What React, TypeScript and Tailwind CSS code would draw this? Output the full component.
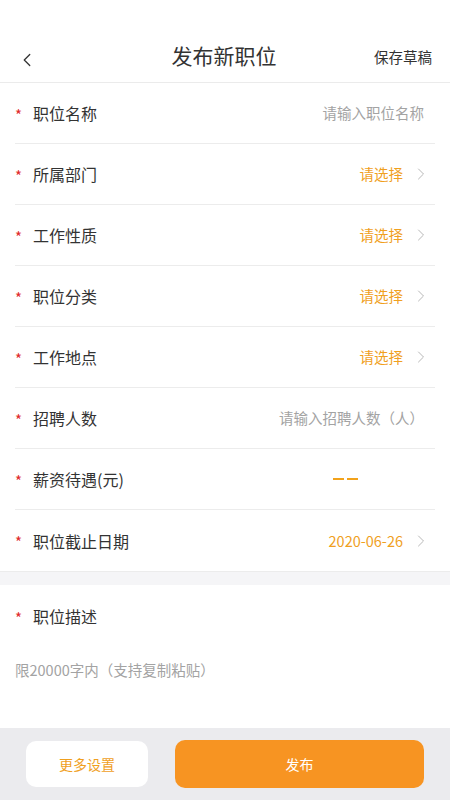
import { ChevronLeft, ChevronRight } from "lucide-react";

type Row = {
  label: string;
  value: string;
  kind: "input" | "select" | "dash";
};

const rows: Row[] = [
  { label: "职位名称", value: "请输入职位名称", kind: "input" },
  { label: "所属部门", value: "请选择", kind: "select" },
  { label: "工作性质", value: "请选择", kind: "select" },
  { label: "职位分类", value: "请选择", kind: "select" },
  { label: "工作地点", value: "请选择", kind: "select" },
  { label: "招聘人数", value: "请输入招聘人数（人）", kind: "input" },
  { label: "薪资待遇(元)", value: "——", kind: "dash" },
  { label: "职位截止日期", value: "2020-06-26", kind: "select" },
];

const font = {
  fontFamily: '"Noto Sans CJK SC", "Noto Sans", sans-serif',
};

const FormRow = ({ row, last }: { row: Row; last: boolean }) => (
  <div
    className={`mx-[15px] h-[61px] flex items-center ${
      last ? "" : "border-b border-[#ececec]"
    }`}
  >
    <span className="text-[#e02a2a] text-[15px] w-[18px] leading-none pt-[2px]">*</span>
    <span className="text-[16px] text-[#333333]">{row.label}</span>
    <div className="flex-1 flex items-center justify-end">
      {row.kind === "input" && (
        <span className="text-[14.5px] text-[#a3a3a3] mr-[11px]">{row.value}</span>
      )}
      {row.kind === "dash" && (
        <span className="mr-[77px] flex gap-[3px]" aria-label={row.value}>
          <span className="w-[11px] h-[2px] bg-[#f2a21b]" />
          <span className="w-[11px] h-[2px] bg-[#f2a21b]" />
        </span>
      )}
      {row.kind === "select" && (
        <>
          <span className="text-[14.5px] text-[#f0a01e]">{row.value}</span>
          <ChevronRight
            size={20}
            strokeWidth={1.2}
            className="text-[#b8b8b8] ml-[8px] mr-[4px]"
          />
        </>
      )}
    </div>
  </div>
);

export default function App() {
  return (
    <div className="w-[450px] h-[800px] bg-white flex flex-col" style={font}>
      {/* 顶部导航 */}
      <div className="h-[83px] flex items-end border-b border-[#ebebeb] pb-[11px] pl-[16px] pr-[18px]">
        <div className="w-[80px] flex items-center">
          <ChevronLeft size={22} strokeWidth={1.4} className="text-[#333]" />
        </div>
        <div className="flex-1 text-center text-[21px] text-[#333333]">发布新职位</div>
        <div className="w-[80px] text-right text-[14.5px] font-normal text-[#333333] pb-[3px]">
          保存草稿
        </div>
      </div>

      {/* 表单 */}
      <div>
        {rows.map((row, i) => (
          <FormRow key={row.label} row={row} last={i === rows.length - 1} />
        ))}
      </div>

      <div className="h-[14px] bg-[#f5f5f7] border-t border-[#ececec]" />

      {/* 职位描述 */}
      <div className="flex-1 bg-white px-[15px]">
        <div className="h-[62px] flex items-center">
          <span className="text-[#e02a2a] text-[15px] w-[18px] leading-none pt-[2px]">*</span>
          <span className="text-[16px] text-[#333333]">职位描述</span>
        </div>
        <div className="text-[14.5px] text-[#a3a3a3] mt-[12px]">限20000字内（支持复制粘贴）</div>
      </div>

      {/* 底部按钮 */}
      <div className="h-[72px] bg-[#ebebee] flex items-center px-[26px] gap-[27px]">
        <button className="w-[122px] h-[46px] bg-white rounded-[10px] text-[14px] text-[#f0a01e]">
          更多设置
        </button>
        <button className="flex-1 h-[48px] bg-[#f79422] rounded-[10px] text-[14px] text-white">
          发布
        </button>
      </div>
    </div>
  );
}
